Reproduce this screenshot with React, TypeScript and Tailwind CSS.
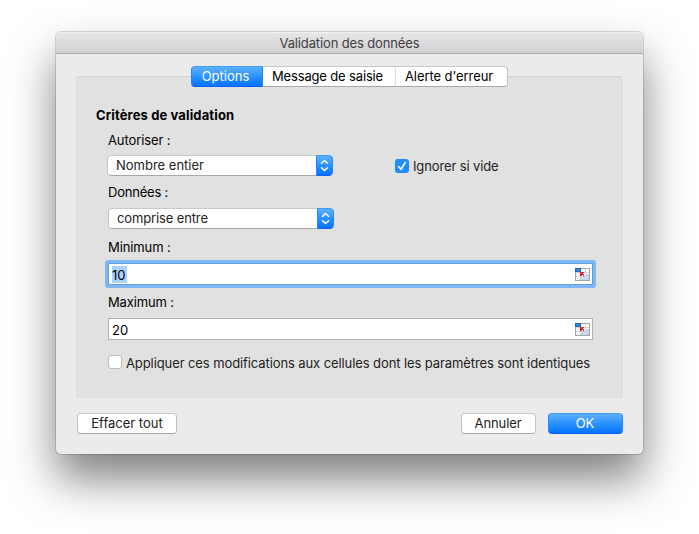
import type { ReactNode } from "react";

const BLUE = "bg-linear-to-b from-[#5cb0fc] via-[#2a92fd] to-[#0473ff] border border-t-[#419cf5] border-x-[#2486fb] border-b-[#0a5cff]";
const WHITE = "bg-white border border-t-[#c9c9c9] border-x-[#c2c2c2] border-b-[#a8a8a8]";

function Label({ children, className = "" }: { children: ReactNode; className?: string }) {
  return <div className={"h-4 leading-4 whitespace-nowrap text-black " + className}>{children}</div>;
}

function Popup({ value, className = "" }: { value: string; className?: string }) {
  return (
    <div className={"flex h-[21px] w-[226px] overflow-hidden rounded-[4px] " + className}>
      <div className={"flex-1 rounded-l-[4px] border-r-0 pl-2 leading-[19px] text-[#222] " + WHITE}>{value}</div>
      <div className={"flex w-[17px] items-center justify-center rounded-r-[4px] " + BLUE}>
        <svg width="9" height="13" viewBox="0 0 9 13" fill="none" stroke="white" strokeWidth="1.5" strokeLinecap="round" strokeLinejoin="round" className="shrink-0">
          <path d="M1.5 4.3 4.5 1.5 7.5 4.3M1.5 8.7 4.5 11.5 7.5 8.7" />
        </svg>
      </div>
    </div>
  );
}

function RangeIcon() {
  return (
    <svg width="15" height="13" viewBox="0 0 15 13" shapeRendering="crispEdges" className="shrink-0">
      <rect width="15" height="13" fill="#a8a4a2" />
      <rect x="1" y="1" width="13" height="11" fill="#fff" />
      <path d="M1 4.5H14M1 8.5H14M5.5 1V12M10.5 1V12" stroke="#d4d4d4" />
      <rect x="10" y="6" width="4" height="6" fill="#bfd5ec" />
      <rect x="5" y="9" width="9" height="3" fill="#bfd5ec" />
      <path d="M10.5 6V12M5 9.5H14" stroke="#cfe0f2" />
      <rect width="6" height="4" fill="#2468b4" />
      <rect x="1" y="1" width="4" height="2" fill="#3985dc" />
      <path d="M5 4h4v1h-1v1h1v2h-1v-1h-1v1h-2z" fill="#d52b32" />
      <rect x="8" y="7" width="1" height="1" fill="#e04a50" />
      <rect x="9" y="8" width="1" height="1" fill="#e88b90" />
      <rect x="8" y="8" width="1" height="1" fill="#e88b90" />
    </svg>
  );
}

function Field({ value, focused, className = "" }: { value: string; focused?: boolean; className?: string }) {
  return (
    <div
      className={
        "flex h-[22px] w-[485px] items-center justify-between border bg-white pr-[2px] pl-[3px] " +
        (focused ? "rounded-[1px] border-[#5f9fdf] shadow-[0_0_0_3px_#7fb7f2] " : "border-[#b1b1b1] ") +
        className
      }
    >
      <span className={"h-[17px] leading-[18px] text-black " + (focused ? "bg-[#a9d2fd] pr-px" : "")}>{value}</span>
      <RangeIcon />
    </div>
  );
}

export default function App() {
  return (
    <div className="h-[534px] w-[699px] overflow-hidden bg-white pt-8 pl-14 font-['Inter',sans-serif] text-[13px]">
      <div className="h-[422px] w-[587px] rounded-[5px] bg-[#ebebeb] shadow-[0_0_0_1px_rgba(0,0,0,0.14),0_25px_45px_rgba(0,0,0,0.5)]">
        <div className="h-[22px] rounded-t-[5px] border-t border-b border-t-[#f1f0f1] border-b-[#b1afb1] bg-linear-to-b from-[#e7e5e7] to-[#d2d0d2] text-center leading-[21px] tracking-[-0.13px] text-[#404040]">
          Validation des données
        </div>
        <div className="mt-[22px] ml-5 h-[322px] w-[547px] rounded-[4px] border border-[#dcdcdc] border-t-[#d0d0d0] bg-[#e1e1e1]">
          <div className="-mt-[11px] ml-[114px] flex h-[21px] w-[317px] leading-[19px]">
            <div className={"w-[72px] rounded-l-[4px] pr-[3px] text-center text-white " + BLUE}>Options</div>
            <div className={"w-[133px] border-l-0 border-r-[#dcdcdc]! pr-[3px] text-center tracking-[-0.15px] text-black " + WHITE}>Message de saisie</div>
            <div className={"w-[112px] rounded-r-[4px] border-l-0! pr-[5px] text-center tracking-[-0.08px] text-black " + WHITE}>Alerte d'erreur</div>
          </div>
          <div className="mt-5 ml-[19px]">
            <Label className="font-bold tracking-[0.13px]">Critères de validation</Label>
            <div className="ml-3">
              <Label className="mt-[9px] tracking-[-0.1px]">Autoriser :</Label>
              <div className="-ml-px mt-[7px] flex h-[21px] items-center">
                <Popup value="Nombre entier" />
                <div className="mt-px ml-[62px] flex h-[14px] w-[14px] items-center justify-center rounded-[3px] bg-[#218cfa]">
                  <svg width="10" height="10" viewBox="0 0 10 10" fill="none" stroke="white" strokeWidth="1.6" strokeLinecap="round" strokeLinejoin="round">
                    <path d="M1.5 5.5 4 8.3 8.3 1.5" />
                  </svg>
                </div>
                <span className="mt-[2px] ml-1 tracking-[-0.13px] text-[#222]">Ignorer si vide</span>
              </div>
              <Label className="mt-2 tracking-[-0.2px]">Données :</Label>
              <Popup value="comprise entre" className="mt-2 tracking-[-0.13px]" />
              <Label className="mt-[10px] tracking-[-0.1px]">Minimum :</Label>
              <Field value="10" focused className="mt-2" />
              <Label className="mt-[9px] tracking-[-0.15px]">Maximum :</Label>
              <Field value="20" className="mt-2" />
              <div className="mt-[15px] flex h-4 items-start gap-1">
                <div className="h-[14px] w-[14px] shrink-0 rounded-[3px] border border-[#bcbcbc] bg-white" />
                <span className="leading-4 whitespace-nowrap tracking-[-0.095px] text-[#222]">Appliquer ces modifications aux cellules dont les paramètres sont identiques</span>
              </div>
            </div>
          </div>
        </div>
        <div className="mt-[15px] ml-[21px] flex h-[21px] w-[546px] text-center leading-[19px] text-[#1b1b1b]">
          <div className={"w-[100px] rounded-[4px] " + WHITE}>Effacer tout</div>
          <div className={"ml-auto w-[75px] rounded-[4px] pr-px tracking-[-0.1px] " + WHITE}>Annuler</div>
          <div className={"ml-3 w-[75px] rounded-[4px] pr-px text-white " + BLUE}>OK</div>
        </div>
      </div>
    </div>
  );
}
